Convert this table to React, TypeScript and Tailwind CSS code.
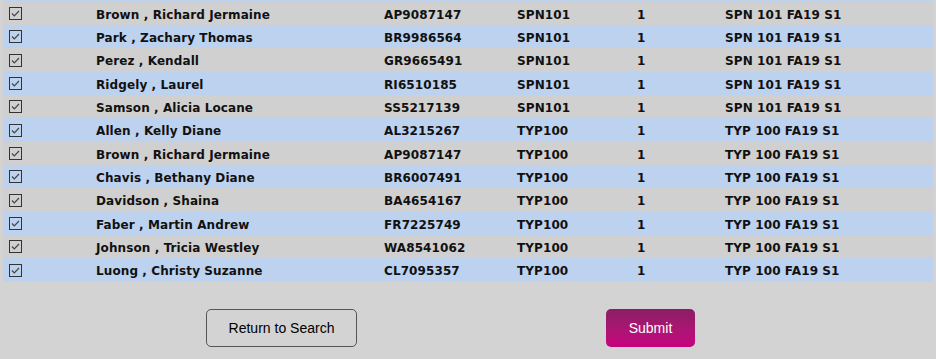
const rows = [
  ["Brown , Richard Jermaine", "AP9087147", "SPN101", "1", "SPN 101 FA19 S1"],
  ["Park , Zachary Thomas", "BR9986564", "SPN101", "1", "SPN 101 FA19 S1"],
  ["Perez , Kendall", "GR9665491", "SPN101", "1", "SPN 101 FA19 S1"],
  ["Ridgely , Laurel", "RI6510185", "SPN101", "1", "SPN 101 FA19 S1"],
  ["Samson , Alicia Locane", "SS5217139", "SPN101", "1", "SPN 101 FA19 S1"],
  ["Allen , Kelly Diane", "AL3215267", "TYP100", "1", "TYP 100 FA19 S1"],
  ["Brown , Richard Jermaine", "AP9087147", "TYP100", "1", "TYP 100 FA19 S1"],
  ["Chavis , Bethany Diane", "BR6007491", "TYP100", "1", "TYP 100 FA19 S1"],
  ["Davidson , Shaina", "BA4654167", "TYP100", "1", "TYP 100 FA19 S1"],
  ["Faber , Martin Andrew", "FR7225749", "TYP100", "1", "TYP 100 FA19 S1"],
  ["Johnson , Tricia Westley", "WA8541062", "TYP100", "1", "TYP 100 FA19 S1"],
  ["Luong , Christy Suzanne", "CL7095357", "TYP100", "1", "TYP 100 FA19 S1"],
];

function CheckBox() {
  return (
    <svg width="13" height="13" viewBox="0 0 13 13" className="block">
      <rect x="0.5" y="0.5" width="12" height="12" fill="none" stroke="#333" />
      <path d="M3 6.5 L5.3 8.8 L10 4" fill="none" stroke="#444" strokeWidth="1.2" />
    </svg>
  );
}

export default function App() {
  return (
    <div className="h-[359px] w-[936px] overflow-hidden bg-[#d3d3d3]">
      <div className="mx-[3px] h-[2px] bg-[#bcd2ef]" />
      <div className="mx-[3px]">
        {rows.map((r, i) => (
          <div
            key={i}
            className={`grid grid-cols-[93px_288px_133px_120px_88px_1fr] items-center font-['DejaVu_Sans',sans-serif] text-[12px] font-bold tracking-[0.1px] text-[#111] ${
              i % 2 === 0 ? "bg-[#d0d0d0]" : "bg-[#bcd2ef]"
            } ${i % 3 === 2 ? "h-6" : "h-[23px]"}`}
          >
            <div className="pl-[6px]">
              <CheckBox />
            </div>
            <div className="pt-[2px]">{r[0]}</div>
            <div className="pt-[2px]">{r[1]}</div>
            <div className="pt-[2px]">{r[2]}</div>
            <div className="pt-[2px]">{r[3]}</div>
            <div className="pt-[2px]">{r[4]}</div>
          </div>
        ))}
      </div>
      <div className="mt-[27px] flex gap-[249px] pl-[206px] font-['Liberation_Sans',Arial,sans-serif] text-[14px]">
        <button className="h-[38px] w-[151px] rounded-[5px] border border-[#555] bg-transparent text-black">
          Return to Search
        </button>
        <button className="h-[38px] w-[89px] rounded-[5px] bg-gradient-to-b from-[#8b1d65] to-[#c8007f] text-white">
          Submit
        </button>
      </div>
    </div>
  );
}
